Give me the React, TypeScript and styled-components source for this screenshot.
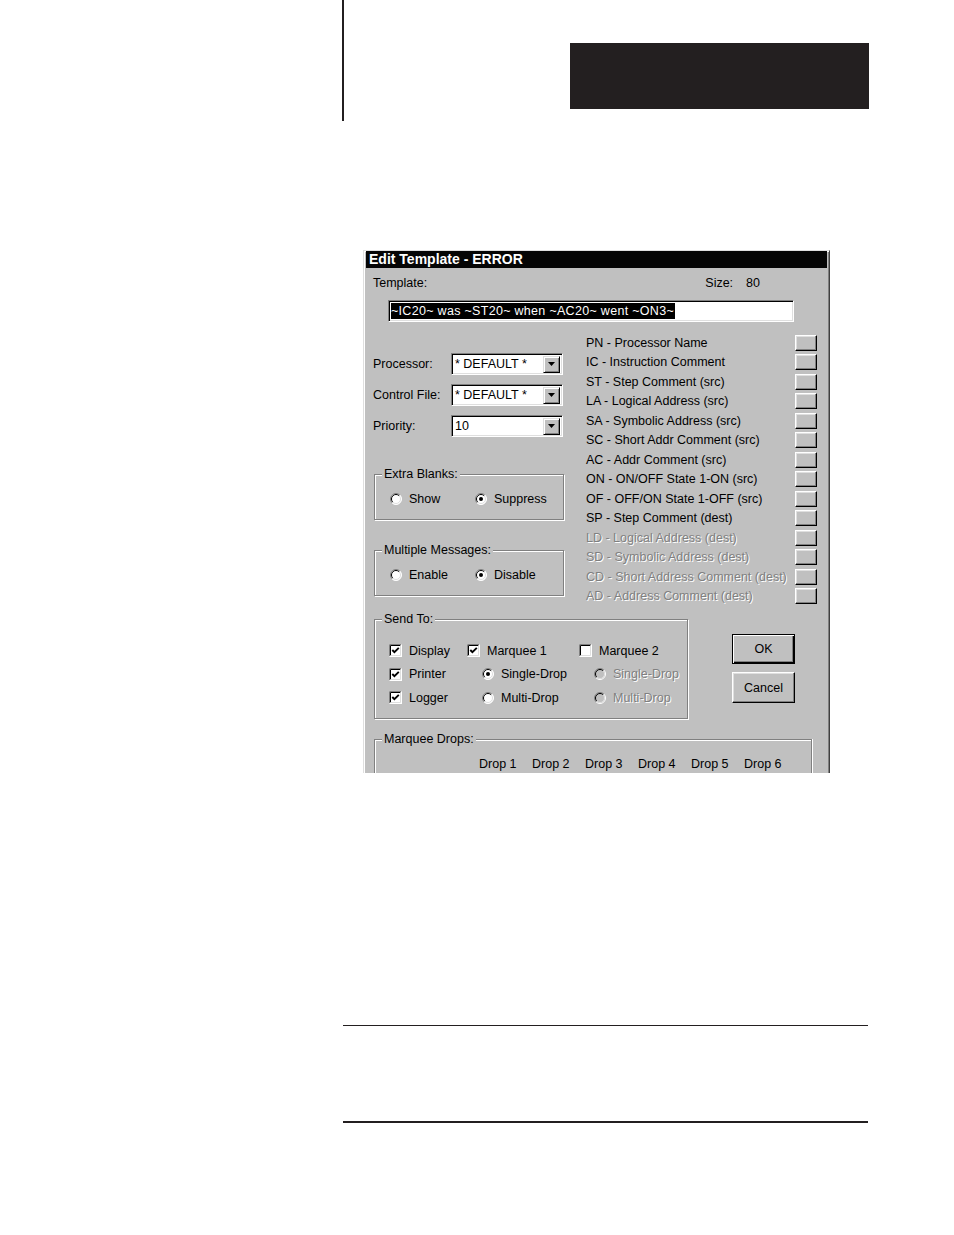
import React from 'react';
import styled, { createGlobalStyle } from 'styled-components';

const GlobalStyle = createGlobalStyle`
  html, body {
    margin: 0;
    padding: 0;
    background: #ffffff;
  }
  body {
    font-family: "Liberation Sans", Arial, sans-serif;
    width: 954px;
  }
`;

const FACE = '#c0c0c0';

const Page = styled.div`
  display: flex;
  flex-direction: column;
  width: 954px;
  min-height: 1235px;
`;

const Header = styled.div`
  display: flex;
  align-items: flex-start;
  height: 122px;
  padding-left: 342px;
`;

const VRule = styled.div`
  width: 2px;
  height: 121px;
  background: #231f20;
`;

const ChapterBox = styled.div`
  width: 299px;
  height: 66px;
  margin: 43px 0 0 226px;
  background: #231f20;
`;

const Dialog = styled.div`
  box-sizing: border-box;
  width: 467px;
  height: 523px;
  margin: 128px 0 0 363px;
  padding: 0 2px;
  overflow: hidden;
  background: ${FACE};
  border: 1px solid;
  border-color: #dfdfdf #404040 #404040 #dfdfdf;
  border-bottom: none;
  box-shadow: inset 1px 1px 0 #ffffff, inset -1px 0 0 #808080;
  font-size: 12.5px;
  color: #000;
`;

const TitleBar = styled.div`
  height: 17px;
  line-height: 17px;
  padding-left: 3px;
  background: #050505;
  color: #ffffff;
  font-weight: bold;
  font-size: 14px;
`;

const TopRow = styled.div`
  display: flex;
  justify-content: space-between;
  align-items: center;
  height: 16px;
  margin-top: 7px;
  padding: 0 67px 0 7px;
`;

const SizeInfo = styled.div`
  display: flex;
  gap: 13px;
`;

const TemplateField = styled.div`
  box-sizing: border-box;
  width: 406px;
  height: 22px;
  margin: 9px 0 0 22px;
  padding: 0 0 0 2px;
  display: flex;
  align-items: center;
  background: #ffffff;
  border: 1px solid;
  border-color: #808080 #ffffff #ffffff #808080;
  box-shadow: inset 1px 1px 0 #000, inset -1px -1px 0 #dfdfdf;
  white-space: nowrap;
`;

const Selected = styled.span`
  background: #000;
  color: #fff;
  line-height: 16px;
  letter-spacing: 0.3px;
  padding-right: 1px;
`;

const MainArea = styled.div`
  display: grid;
  grid-template-columns: 191px 231px;
  column-gap: 22px;
  margin-top: 11px;
  padding-left: 7px;
`;

const LeftColumn = styled.div`
  display: flex;
  flex-direction: column;
  padding-top: 20px;
`;

const FieldRow = styled.div<{ $first?: boolean }>`
  display: flex;
  align-items: center;
  justify-content: space-between;
  height: 22px;
  margin-top: ${p => (p.$first ? 0 : 9)}px;
`;

const Combo = styled.div`
  box-sizing: border-box;
  width: 112px;
  height: 22px;
  display: flex;
  align-items: center;
  justify-content: space-between;
  padding: 2px 2px 2px 3px;
  margin-right: 1px;
  background: #ffffff;
  border: 1px solid;
  border-color: #808080 #ffffff #ffffff #808080;
  box-shadow: inset 1px 1px 0 #000, inset -1px -1px 0 #dfdfdf;
`;

const DropButton = styled.div`
  box-sizing: border-box;
  width: 17px;
  height: 17px;
  display: flex;
  align-items: center;
  justify-content: center;
  background: ${FACE};
  border: 1px solid;
  border-color: #dfdfdf #000 #000 #dfdfdf;
  box-shadow: inset 1px 1px 0 #fff, inset -1px -1px 0 #808080;
`;

const GroupBox = styled.div<{ $top: number; $height: number; $width: number }>`
  box-sizing: border-box;
  width: ${p => p.$width}px;
  height: ${p => p.$height}px;
  margin: ${p => p.$top}px 0 0 1px;
  border: 1px solid #808080;
  box-shadow: 1px 1px 0 #ffffff, inset 1px 1px 0 #ffffff;
`;

const GroupTitle = styled.div`
  width: max-content;
  height: 14px;
  line-height: 14px;
  margin: -8px 0 0 7px;
  padding: 0 2px;
  background: ${FACE};
`;

const RadioLine = styled.div`
  display: flex;
  align-items: center;
  height: 16px;
  margin-top: 10px;
  padding-left: 15px;
`;

const Option = styled.div<{ $width?: number }>`
  display: flex;
  align-items: center;
  gap: 7px;
  width: ${p => (p.$width ? `${p.$width}px` : 'auto')};
`;

const OptionText = styled.span<{ $disabled?: boolean }>`
  color: ${p => (p.$disabled ? '#808080' : '#000')};
  text-shadow: ${p => (p.$disabled ? '1px 1px 0 #ffffff' : 'none')};
`;

const TokenList = styled.div`
  display: flex;
  flex-direction: column;
`;

const TokenRow = styled.div`
  display: flex;
  align-items: center;
  justify-content: space-between;
  height: 19.5px;
`;

const TokenText = styled.span<{ $disabled?: boolean }>`
  white-space: nowrap;
  color: ${p => (p.$disabled ? '#808080' : '#000')};
  text-shadow: ${p => (p.$disabled ? '1px 1px 0 #ffffff' : 'none')};
`;

const TokenButton = styled.div`
  box-sizing: border-box;
  width: 22px;
  height: 16px;
  background: ${FACE};
  border: 1px solid;
  border-color: #ffffff #000 #000 #ffffff;
  box-shadow: inset -1px -1px 0 #808080, inset 1px 1px 0 #dfdfdf;
`;

const BottomRow = styled.div`
  display: flex;
  align-items: flex-start;
  margin-top: 13px;
  padding-left: 7px;
`;

const SendGrid = styled.div`
  display: grid;
  grid-template-columns: 78px 112px 100px;
  grid-auto-rows: 23.5px;
  align-items: center;
  margin-top: 13px;
  padding-left: 14px;
`;

const Indent = styled.div`
  padding-left: 15px;
`;

const ButtonColumn = styled.div`
  display: flex;
  flex-direction: column;
  gap: 8px;
  margin: 15px 0 0 44px;
`;

const PushButton = styled.div<{ $default?: boolean; $height: number }>`
  box-sizing: border-box;
  width: 63px;
  height: ${p => p.$height}px;
  display: flex;
  align-items: center;
  justify-content: center;
  background: ${FACE};
  border: 1px solid;
  border-color: ${p => (p.$default ? '#000' : '#ffffff #000 #000 #ffffff')};
  box-shadow: ${p =>
    p.$default
      ? 'inset 1px 1px 0 #ffffff, inset -1px -1px 0 #000, inset -2px -2px 0 #808080'
      : 'inset -1px -1px 0 #808080, inset 1px 1px 0 #dfdfdf'};
`;

const DropsBox = styled.div`
  box-sizing: border-box;
  width: 438px;
  height: 60px;
  margin: 20px 0 0 8px;
  border: 1px solid #808080;
  border-bottom: none;
  box-shadow: 1px 0 0 #ffffff, inset 1px 1px 0 #ffffff;
`;

const DropsHeader = styled.div`
  display: grid;
  grid-template-columns: repeat(6, 53px);
  height: 16px;
  align-items: center;
  margin-top: 10px;
  padding-left: 104px;
`;

const HRule = styled.div<{ $top: number; $thick?: boolean }>`
  width: 525px;
  height: ${p => (p.$thick ? 2 : 1)}px;
  margin: ${p => p.$top}px 0 0 343px;
  background: #231f20;
`;

function RadioIcon({ checked, disabled }: { checked?: boolean; disabled?: boolean }) {
  return (
    <svg width="12" height="12" viewBox="0 0 12 12">
      <circle cx="6" cy="6" r="5.5" fill={disabled ? FACE : '#ffffff'} />
      <path d="M2.1 9.9 A5.5 5.5 0 0 1 9.9 2.1" fill="none" stroke="#808080" />
      <path d="M9.9 2.1 A5.5 5.5 0 0 1 2.1 9.9" fill="none" stroke="#ffffff" />
      <path d="M2.8 9.2 A4.5 4.5 0 0 1 9.2 2.8" fill="none" stroke="#000" />
      <path d="M9.2 2.8 A4.5 4.5 0 0 1 2.8 9.2" fill="none" stroke="#dfdfdf" />
      {checked && <circle cx="6" cy="6" r="2" fill="#000" />}
    </svg>
  );
}

function CheckIcon({ checked }: { checked?: boolean }) {
  return (
    <svg width="13" height="13" viewBox="0 0 13 13">
      <rect x="0" y="0" width="13" height="13" fill="#ffffff" />
      <path d="M0.5 12.5 V0.5 H12.5" fill="none" stroke="#808080" />
      <path d="M12.5 0.5 V12.5 H0.5" fill="none" stroke="#ffffff" />
      <path d="M1.5 11.5 V1.5 H11.5" fill="none" stroke="#000" />
      <path d="M11.5 1.5 V11.5 H1.5" fill="none" stroke="#dfdfdf" />
      {checked && (
        <path d="M3.3 6 L5.4 8.2 L9.8 3.8" fill="none" stroke="#000" strokeWidth="1.9" />
      )}
    </svg>
  );
}

function ArrowDown() {
  return (
    <svg width="7" height="4" viewBox="0 0 7 4">
      <path d="M0 0 H7 L3.5 4 Z" fill="#000" />
    </svg>
  );
}

type Token = { code: string; label: string; disabled?: boolean };

const tokens: Token[] = [
  { code: 'PN', label: 'Processor Name' },
  { code: 'IC', label: 'Instruction Comment' },
  { code: 'ST', label: 'Step Comment (src)' },
  { code: 'LA', label: 'Logical Address (src)' },
  { code: 'SA', label: 'Symbolic Address (src)' },
  { code: 'SC', label: 'Short Addr Comment (src)' },
  { code: 'AC', label: 'Addr Comment (src)' },
  { code: 'ON', label: 'ON/OFF State 1-ON (src)' },
  { code: 'OF', label: 'OFF/ON State 1-OFF (src)' },
  { code: 'SP', label: 'Step Comment (dest)' },
  { code: 'LD', label: 'Logical Address (dest)', disabled: true },
  { code: 'SD', label: 'Symbolic Address (dest)', disabled: true },
  { code: 'CD', label: 'Short Address Comment (dest)', disabled: true },
  { code: 'AD', label: 'Address Comment (dest)', disabled: true },
];

const fields = [
  { label: 'Processor:', value: '* DEFAULT *' },
  { label: 'Control File:', value: '* DEFAULT *' },
  { label: 'Priority:', value: '10' },
];

function RadioGroup(props: { title: string; top: number; options: string[]; selected: number }) {
  return (
    <GroupBox $top={props.top} $height={46} $width={190}>
      <GroupTitle>{props.title}</GroupTitle>
      <RadioLine>
        {props.options.map((o, i) => (
          <Option key={o} $width={85}>
            <RadioIcon checked={i === props.selected} />
            <OptionText>{o}</OptionText>
          </Option>
        ))}
      </RadioLine>
    </GroupBox>
  );
}

function Check(props: { label: string; checked?: boolean }) {
  return (
    <Option>
      <CheckIcon checked={props.checked} />
      <OptionText>{props.label}</OptionText>
    </Option>
  );
}

function Radio(props: { label: string; checked?: boolean; disabled?: boolean }) {
  return (
    <Indent>
      <Option>
        <RadioIcon checked={props.checked} disabled={props.disabled} />
        <OptionText $disabled={props.disabled}>{props.label}</OptionText>
      </Option>
    </Indent>
  );
}

export default function App() {
  return (
    <Page>
      <GlobalStyle />
      <Header>
        <VRule />
        <ChapterBox />
      </Header>

      <Dialog>
        <TitleBar>Edit Template - ERROR</TitleBar>
        <TopRow>
          <span>Template:</span>
          <SizeInfo>
            <span>Size:</span>
            <span>80</span>
          </SizeInfo>
        </TopRow>
        <TemplateField>
          <Selected>~IC20~ was ~ST20~ when ~AC20~ went ~ON3~</Selected>
        </TemplateField>

        <MainArea>
          <LeftColumn>
            {fields.map((f, i) => (
              <FieldRow key={f.label} $first={i === 0}>
                <span>{f.label}</span>
                <Combo>
                  <span>{f.value}</span>
                  <DropButton>
                    <ArrowDown />
                  </DropButton>
                </Combo>
              </FieldRow>
            ))}
            <RadioGroup title="Extra Blanks:" top={37} options={['Show', 'Suppress']} selected={1} />
            <RadioGroup
              title="Multiple Messages:"
              top={30}
              options={['Enable', 'Disable']}
              selected={1}
            />
          </LeftColumn>

          <TokenList>
            {tokens.map(t => (
              <TokenRow key={t.code}>
                <TokenText $disabled={t.disabled}>
                  {t.code} - {t.label}
                </TokenText>
                <TokenButton />
              </TokenRow>
            ))}
          </TokenList>
        </MainArea>

        <BottomRow>
          <GroupBox $top={0} $height={100} $width={314}>
            <GroupTitle>Send To:</GroupTitle>
            <SendGrid>
              <Check label="Display" checked />
              <Check label="Marquee 1" checked />
              <Check label="Marquee 2" />
              <Check label="Printer" checked />
              <Radio label="Single-Drop" checked />
              <Radio label="Single-Drop" disabled />
              <Check label="Logger" checked />
              <Radio label="Multi-Drop" />
              <Radio label="Multi-Drop" disabled />
            </SendGrid>
          </GroupBox>
          <ButtonColumn>
            <PushButton $default $height={30}>OK</PushButton>
            <PushButton $height={31}>Cancel</PushButton>
          </ButtonColumn>
        </BottomRow>

        <DropsBox>
          <GroupTitle>Marquee Drops:</GroupTitle>
          <DropsHeader>
            {[1, 2, 3, 4, 5, 6].map(n => (
              <span key={n}>Drop {n}</span>
            ))}
          </DropsHeader>
        </DropsBox>
      </Dialog>

      <HRule $top={252} />
      <HRule $top={95} $thick />
    </Page>
  );
}
